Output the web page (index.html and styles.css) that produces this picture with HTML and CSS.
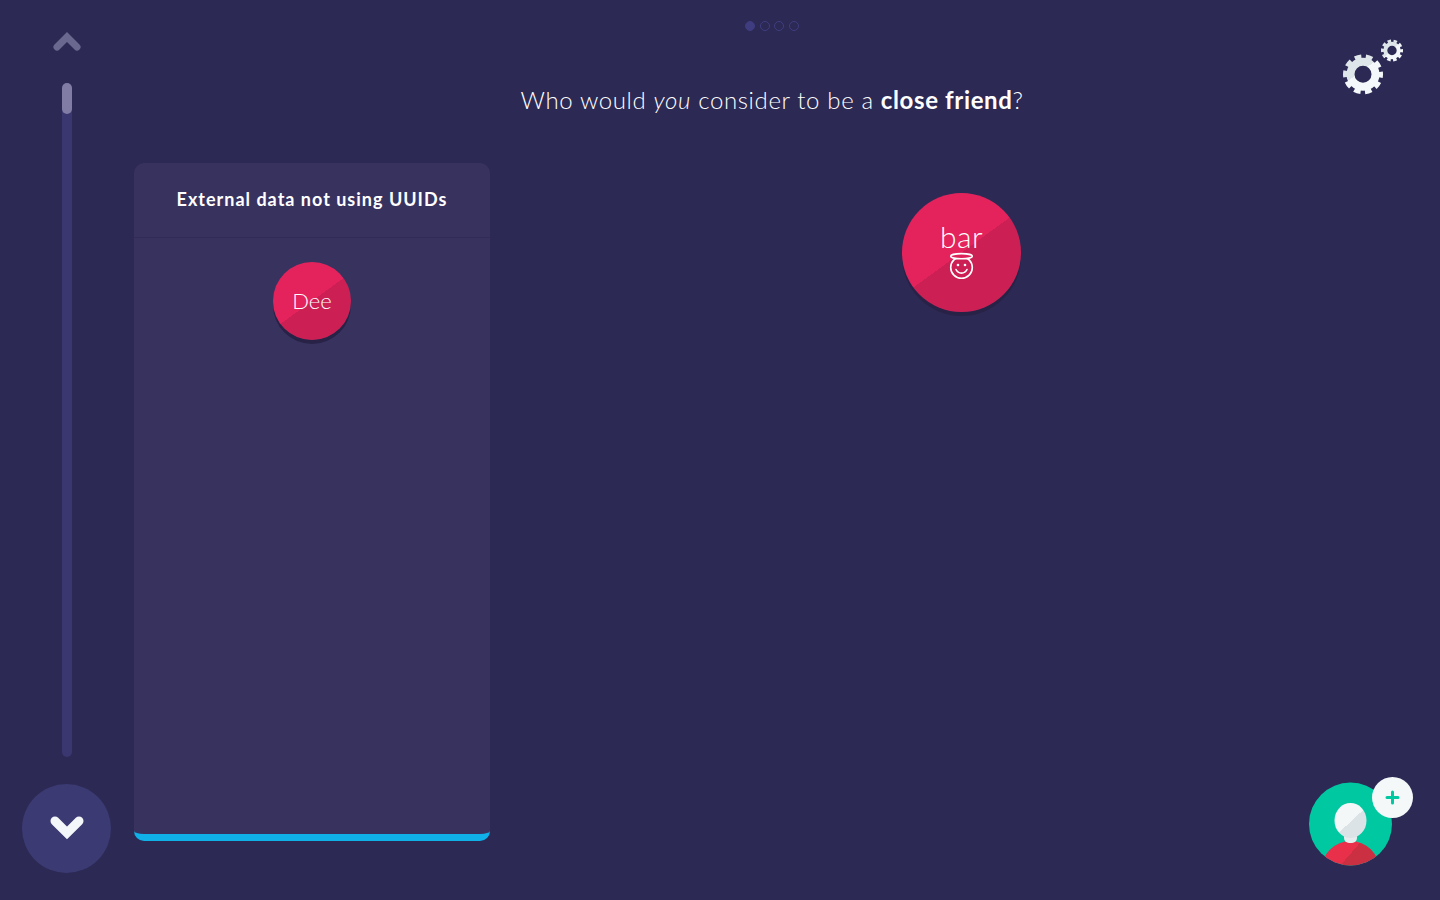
FILE: index.html
```html
<!DOCTYPE html>
<html>
<head>
<meta charset="UTF-8">
<title>Close friends</title>
<link rel="stylesheet" href="styles.css">
</head>
<body>
	<div class="page">
		<div class="sidebar">
			<svg class="arrow-up" width="30" height="24" viewBox="0 0 30 24">
				<polyline points="5,17 15,7 25,17" fill="none" stroke="#6b6890" stroke-width="7" stroke-linecap="round"/>
			</svg>
			<div class="track"><div class="thumb"></div></div>
			<div class="btn-down">
				<svg width="36" height="28" viewBox="0 0 36 28">
					<polyline points="6,6 18,18 30,6" fill="none" stroke="#f4f7f9" stroke-width="9" stroke-linecap="round"/>
				</svg>
			</div>
		</div>
		<div class="content">
			<div class="head">
				<div class="dots">
					<span class="dot on"></span>
					<span class="dot"></span>
					<span class="dot"></span>
					<span class="dot"></span>
				</div>
				<h1 class="title">Who would <em>you</em> consider to be a <strong>close friend</strong>?</h1>
			</div>
			<div class="card">
				<div class="card-head">External data not using UUIDs</div>
				<div class="card-body">
					<div class="node node-small">Dee</div>
				</div>
			</div>
			<div class="node node-big">
				<span class="node-name">bar</span>
				<svg width="26" height="28" viewBox="0 0 26 28">
					<circle cx="12.500" cy="15.500" r="10.800" fill="none" stroke="#fff" stroke-width="1.600"/>
					<ellipse cx="12.500" cy="4.200" rx="10.800" ry="2.600" fill="#dc2259" stroke="#fff" stroke-width="1.600"/>
					<circle cx="9" cy="13" r="1.300" fill="#fff"/>
					<circle cx="16" cy="13" r="1.300" fill="#fff"/>
					<path d="M7 17.500c1.200 2.600 3.200 3.600 5.500 3.600s4.300-1 5.500-3.600" fill="none" stroke="#fff" stroke-width="1.600" stroke-linecap="round"/>
				</svg>
			</div>
		</div>
	</div>

	<svg class="gears" width="70" height="64" viewBox="0 0 70 64">
		<defs>
			<linearGradient id="gearBig" gradientUnits="userSpaceOnUse" x1="13" y1="20" x2="33" y2="48">
				<stop offset="0.5" stop-color="#dfe6e9"/>
				<stop offset="0.5" stop-color="#f5f8fa"/>
			</linearGradient>
			<linearGradient id="gearSmall" gradientUnits="userSpaceOnUse" x1="45" y1="6" x2="59" y2="22">
				<stop offset="0.5" stop-color="#dfe6e9"/>
				<stop offset="0.5" stop-color="#f5f8fa"/>
			</linearGradient>
		</defs>
		<circle cx="23" cy="38.300" r="12.500" fill="none" stroke="url(#gearBig)" stroke-width="8"/>
		<circle cx="23" cy="38.300" r="17.500" fill="none" stroke="url(#gearBig)" stroke-width="5" stroke-dasharray="6.500 4.500" stroke-dashoffset="3.250"/>
		<circle cx="52" cy="14.500" r="6.700" fill="none" stroke="url(#gearSmall)" stroke-width="4"/>
		<circle cx="52" cy="14.500" r="9.500" fill="none" stroke="url(#gearSmall)" stroke-width="3" stroke-dasharray="3.500 2.470" stroke-dashoffset="1.750"/>
	</svg>

	<div class="avatar">
		<svg width="84" height="84" viewBox="0 0 84 84">
			<defs>
				<clipPath id="avatarClip"><circle cx="41.500" cy="42" r="41.500"/></clipPath>
				<linearGradient id="headFill" gradientUnits="userSpaceOnUse" x1="37" y1="31" x2="50" y2="45">
					<stop offset="0.5" stop-color="#f3f7f8"/>
					<stop offset="0.5" stop-color="#dbe3e6"/>
				</linearGradient>
				<linearGradient id="bodyFill" gradientUnits="userSpaceOnUse" x1="35" y1="64" x2="50" y2="77">
					<stop offset="0.5" stop-color="#e8304a"/>
					<stop offset="0.5" stop-color="#cb2f42"/>
				</linearGradient>
			</defs>
			<g clip-path="url(#avatarClip)">
				<rect width="84" height="84" fill="#00c9a2"/>
				<ellipse cx="41.500" cy="88" rx="29" ry="29" fill="url(#bodyFill)"/>
				<rect x="35" y="50" width="13" height="11" rx="5" fill="#e6ecee"/>
				<ellipse cx="41.500" cy="38.500" rx="16" ry="17.500" fill="url(#headFill)"/>
			</g>
		</svg>
		<div class="badge">
			<svg width="16" height="16" viewBox="0 0 16 16">
				<path d="M7.500 2v11M2 7.500h11" stroke="#00c9a2" stroke-width="3" stroke-linecap="round"/>
			</svg>
		</div>
	</div>
</body>
</html>
```

FILE: styles.css
```css
html, body {
	margin: 0;
	height: 100%;
}
body {
	background: #2c2954;
	color: #fff;
	font-family: "Lato", "Open Sans", sans-serif;
	overflow: hidden;
}
.page {
	display: flex;
	height: 900px;
}

/* left column */
.sidebar {
	width: 134px;
	flex: none;
	display: flex;
	flex-direction: column;
	align-items: center;
	padding-top: 30px;
	box-sizing: border-box;
}
.arrow-up {
	display: block;
}
.track {
	width: 10px;
	height: 674px;
	margin-top: 29px;
	border-radius: 5px;
	background: #3a3770;
}
.thumb {
	height: 31px;
	border-radius: 5px;
	background: #807ca5;
}
.btn-down {
	width: 89px;
	height: 89px;
	margin-top: 27px;
	align-self: flex-start;
	margin-left: 22px;
	border-radius: 50%;
	background: #3b3a72;
	display: flex;
	align-items: center;
	justify-content: center;
}

/* main area */
.content {
	flex: 1;
	position: relative;
}
.head {
	padding: 21px 30px 0 0;
	text-align: center;
}
.dots {
	display: flex;
	justify-content: center;
	gap: 4.67px;
}
.dot {
	width: 10px;
	height: 10px;
	box-sizing: border-box;
	border: 1px solid #3f3d80;
	border-radius: 50%;
}
.dot.on {
	background: #3f3d80;
}
.title {
	margin: 54px 0 0;
	font-size: 24px;
	line-height: 30px;
	font-weight: 300;
	letter-spacing: 0.63px;
}
.title strong {
	font-weight: 700;
}

.card {
	width: 356px;
	height: 678px;
	margin-top: 48px;
	box-sizing: border-box;
	background: #38325f;
	border-bottom: 7px solid #10b0e8;
	border-radius: 10px;
}
.card-head {
	height: 75px;
	box-sizing: border-box;
	padding-bottom: 2px;
	border-bottom: 1px solid #312b56;
	display: flex;
	align-items: center;
	justify-content: center;
	font-size: 18px;
	font-weight: 700;
	letter-spacing: 1px;
}
.card-body {
	padding-top: 24px;
}

.node {
	display: flex;
	flex-direction: column;
	align-items: center;
	justify-content: center;
	border-radius: 50%;
	background: linear-gradient(144deg, #e4235c 50%, #cc2055 50%);
	box-shadow: 0 4px 0 #282247;
	font-weight: 300;
}
.node-small {
	width: 78px;
	height: 78px;
	margin: 0 auto;
	padding-bottom: 2px;
	box-sizing: border-box;
	font-size: 22px;
}
.node-big {
	position: absolute;
	left: 768px;
	top: 193px;
	width: 119px;
	height: 119px;
	padding-bottom: 4px;
	box-sizing: border-box;
	font-size: 30px;
	line-height: 30px;
}
.node-name {
	letter-spacing: 0.5px;
	margin-top: -1px;
	margin-bottom: 1px;
}

/* overlays */
.gears {
	position: absolute;
	left: 1340px;
	top: 36px;
}
.avatar {
	position: absolute;
	left: 1309px;
	top: 782px;
	width: 84px;
	height: 84px;
}
.badge {
	position: absolute;
	left: 63px;
	top: -5px;
	width: 41px;
	height: 41px;
	border-radius: 50%;
	background: #f4f8f9;
	display: flex;
	align-items: center;
	justify-content: center;
}
```
